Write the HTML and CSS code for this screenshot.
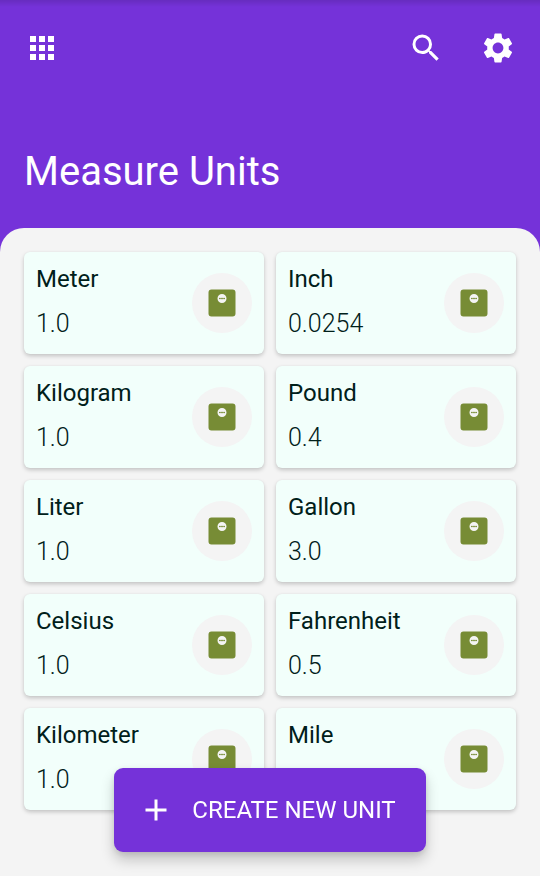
FILE: index.html
```html
<!DOCTYPE html>
<html lang="en">
<head>
<meta charset="utf-8">
<meta name="viewport" content="width=device-width, initial-scale=1">
<title>Measure Units</title>
<link rel="stylesheet" href="styles.css">
</head>
<body>
<svg class="sprite" aria-hidden="true">
  <symbol id="scale" viewBox="0 0 24 24">
    <path fill-rule="evenodd" d="M5 3h14a2 2 0 0 1 2 2v14a2 2 0 0 1-2 2H5a2 2 0 0 1-2-2V5a2 2 0 0 1 2-2zM12 6a3 3 0 1 0 0 6 3 3 0 0 0 0-6z"/>
    <circle cx="10.5" cy="9" r=".5"/><circle cx="12" cy="9" r=".5"/><circle cx="13.5" cy="9" r=".5"/>
    <path opacity=".55" d="M10.5 8.6h3v.8h-3z"/>
  </symbol>
</svg>
<header class="header">
  <nav class="toolbar">
    <button class="icon-button" type="button" aria-label="Menu">
      <svg viewBox="0 0 24 24"><path d="M4 8h4V4H4v4zm6 12h4v-4h-4v4zm-6 0h4v-4H4v4zm0-6h4v-4H4v4zm6 0h4v-4h-4v4zm6-10v4h4V4h-4zm-6 4h4V4h-4v4zm6 6h4v-4h-4v4zm0 6h4v-4h-4v4z"/></svg>
    </button>
    <div class="actions">
      <button class="icon-button" type="button" aria-label="Search">
        <svg viewBox="0 0 24 24"><path d="M15.5 14h-.79l-.28-.27A6.471 6.471 0 0 0 16 9.500 6.500 6.500 0 1 0 9.500 16c1.610 0 3.090-.59 4.230-1.570l.27.28v.79l5 4.990L20.490 19l-4.990-5zm-6 0C7.010 14 5 11.990 5 9.500S7.010 5 9.500 5 14 7.010 14 9.500 11.990 14 9.500 14z"/></svg>
      </button>
      <button class="icon-button" type="button" aria-label="Settings">
        <svg viewBox="0 0 24 24"><path d="M19.140 12.940c.04-.3.06-.61.06-.94 0-.32-.02-.64-.07-.94l2.030-1.580c.18-.14.23-.41.12-.61l-1.920-3.320c-.12-.22-.37-.29-.59-.22l-2.390.96c-.5-.38-1.030-.7-1.620-.94l-.36-2.540c-.04-.24-.24-.41-.48-.41h-3.840c-.24 0-.43.17-.47.41l-.36 2.540c-.59.24-1.130.57-1.620.94l-2.390-.96c-.22-.08-.47 0-.59.22L2.740 8.870c-.12.21-.08.47.12.61l2.030 1.580c-.05.3-.09.63-.09.94s.02.64.07.94l-2.030 1.580c-.18.14-.23.41-.12.61l1.920 3.320c.12.22.37.29.59.22l2.390-.96c.5.38 1.030.7 1.620.94l.36 2.540c.05.24.24.41.48.41h3.840c.24 0 .44-.17.47-.41l.36-2.540c.59-.24 1.130-.56 1.620-.94l2.390.96c.22.08.47 0 .59-.22l1.920-3.320c.12-.22.07-.47-.12-.61l-2.010-1.580zM12 15.600c-1.980 0-3.600-1.620-3.600-3.600s1.620-3.600 3.600-3.600 3.600 1.620 3.600 3.600-1.620 3.600-3.600 3.600z"/></svg>
      </button>
    </div>
  </nav>
  <h1 class="title">Measure Units</h1>
</header>
<main class="sheet">
  <ul class="units">
    <li class="card"><div class="text"><h2 class="name">Meter</h2><p class="value">1.0</p></div><span class="badge"><svg><use href="#scale"/></svg></span></li>
    <li class="card"><div class="text"><h2 class="name">Inch</h2><p class="value">0.0254</p></div><span class="badge"><svg><use href="#scale"/></svg></span></li>
    <li class="card"><div class="text"><h2 class="name">Kilogram</h2><p class="value">1.0</p></div><span class="badge"><svg><use href="#scale"/></svg></span></li>
    <li class="card"><div class="text"><h2 class="name">Pound</h2><p class="value">0.4</p></div><span class="badge"><svg><use href="#scale"/></svg></span></li>
    <li class="card"><div class="text"><h2 class="name">Liter</h2><p class="value">1.0</p></div><span class="badge"><svg><use href="#scale"/></svg></span></li>
    <li class="card"><div class="text"><h2 class="name">Gallon</h2><p class="value">3.0</p></div><span class="badge"><svg><use href="#scale"/></svg></span></li>
    <li class="card"><div class="text"><h2 class="name">Celsius</h2><p class="value">1.0</p></div><span class="badge"><svg><use href="#scale"/></svg></span></li>
    <li class="card"><div class="text"><h2 class="name">Fahrenheit</h2><p class="value">0.5</p></div><span class="badge"><svg><use href="#scale"/></svg></span></li>
    <li class="card"><div class="text"><h2 class="name">Kilometer</h2><p class="value">1.0</p></div><span class="badge"><svg><use href="#scale"/></svg></span></li>
    <li class="card"><div class="text"><h2 class="name">Mile</h2></div><span class="badge"><svg><use href="#scale"/></svg></span></li>
  </ul>
</main>
<div class="fab-dock">
  <button class="fab" type="button">
    <svg viewBox="0 0 24 24"><path d="M19 13h-6v6h-2v-6H5v-2h6V5h2v6h6v2z"/></svg>
    CREATE NEW UNIT
  </button>
</div>
</body>
</html>
```
FILE: styles.css
```css
:root {
  --purple: #7532d9;
  --surface: #f4f4f4;
  --card: #f2fffb;
  --ink: #00201a;
  --olive: #778c35;
}

* {
  box-sizing: border-box;
}

body {
  margin: 0;
  min-height: 100vh;
  display: flex;
  flex-direction: column;
  background: var(--purple);
  font-family: Roboto, "Liberation Sans", sans-serif;
  color: var(--ink);
}

h1, h2, p, ul {
  margin: 0;
  padding: 0;
}

button {
  border: 0;
  font: inherit;
  color: inherit;
  cursor: pointer;
}

svg {
  display: block;
  width: 36px;
  height: 36px;
  fill: currentColor;
}

.sprite {
  position: absolute;
  width: 0;
  height: 0;
}

.header {
  color: #fff;
  padding: 12px 6px 30px;
  background: linear-gradient(rgb(0 0 0 / 12%), transparent 7px);
}

.toolbar,
.actions {
  display: flex;
  justify-content: space-between;
}

.icon-button {
  padding: 18px;
  background: none;
}

.icon-button svg {
  flex: none;
}

.title {
  padding: 62px 18px 0;
  font-size: 40px;
  line-height: 52px;
  font-weight: 400;
}

.sheet {
  flex: 1;
  padding: 24px 24px 66px;
  border-radius: 24px 24px 0 0;
  background: var(--surface);
}

.units {
  display: grid;
  grid-template-columns: 1fr 1fr;
  gap: 12px;
  list-style: none;
}

.card {
  display: flex;
  align-items: center;
  justify-content: space-between;
  padding: 12px;
  min-height: 102px;
  border-radius: 6px;
  background: var(--card);
  box-shadow: 0 2px 4px rgb(0 0 0 / 20%), 0 0 2px rgb(0 0 0 / 4%);
}

.text {
  align-self: stretch;
}

.name,
.value {
  font-size: 24px;
  line-height: 30px;
  font-weight: 400;
}

.value {
  margin-top: 15px;
  font-size: 25px;
  font-weight: 300;
}

.badge {
  padding: 12px;
  border-radius: 50%;
  background: var(--surface);
  color: var(--olive);
}

.fab-dock {
  position: fixed;
  inset: auto 0 24px;
  display: flex;
  justify-content: center;
}

.fab {
  display: flex;
  align-items: center;
  gap: 18px;
  padding: 24px 30px 24px 24px;
  border-radius: 9px;
  background: var(--purple);
  color: #fff;
  font-size: 24px;
  line-height: 36px;
  box-shadow: 0 8px 14px rgb(0 0 0 / 20%), 0 2px 6px rgb(0 0 0 / 10%);
}
```
